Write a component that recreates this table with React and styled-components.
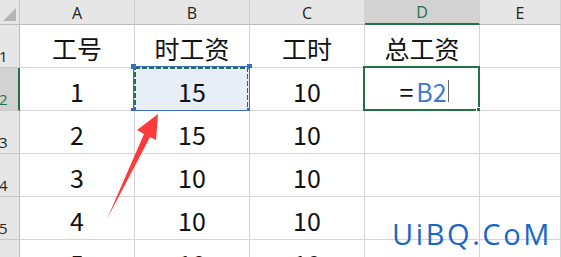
import React from "react";
import styled, { createGlobalStyle } from "styled-components";

const GlobalStyle = createGlobalStyle`
  html, body {
    margin: 0;
    padding: 0;
    background: #fff;
    overflow: hidden;
  }
  * {
    box-sizing: border-box;
  }
`;

const cols = ["A", "B", "C", "D", "E"];
const rows = [
  ["工号", "时工资", "工时", "总工资", ""],
  ["1", "15", "10", "", ""],
  ["2", "15", "10", "", ""],
  ["3", "10", "10", "", ""],
  ["4", "10", "10", "", ""],
  ["5", "10", "10", "", ""],
];

const App = () => {
  return (
    <>
      <GlobalStyle />
      <Sheet>
        <Corner>
          <CornerMark />
        </Corner>
        {cols.map((c) => (
          <ColHead key={c} active={c === "D"}>
            {c}
          </ColHead>
        ))}
        {rows.map((row, r) => (
          <React.Fragment key={r}>
            <RowHead active={r === 1}>
              <span>{r + 1}</span>
            </RowHead>
            {row.map((val, c) => {
              const copied = r === 1 && c === 1;
              const editing = r === 1 && c === 3;
              return (
                <Cell key={c} copied={copied}>
                  {editing ? (
                    <>
                      <Formula>
                        <Eq>=</Eq>
                        <Ref>B2</Ref>
                        <Caret />
                      </Formula>
                      <ActiveBox>
                        <FillHandle />
                      </ActiveBox>
                    </>
                  ) : (
                    val
                  )}
                  {copied && (
                    <CopyBox>
                      <svg width="100%" height="100%">
                        <rect
                          x="2"
                          y="2"
                          width="113"
                          height="42"
                          fill="none"
                          stroke="#217346"
                          strokeWidth="2"
                          strokeDasharray="5 2"
                        />
                      </svg>
                      <Handle style={{ left: -3, top: -3 }} />
                      <Handle style={{ right: -3, top: -3 }} />
                      <Handle style={{ left: -3, bottom: -3 }} />
                      <Handle style={{ right: -3, bottom: -3 }} />
                    </CopyBox>
                  )}
                </Cell>
              );
            })}
          </React.Fragment>
        ))}
        <Arrow width="561" height="257" viewBox="0 0 561 257">
          <polygon
            points="158,114 156,140 150,137 107,219 144,134 137,130"
            fill="#ff3a3a"
          />
        </Arrow>
        <Watermark>UiBQ.CoM</Watermark>
      </Sheet>
    </>
  );
};

export default App;

const Sheet = styled.div`
  position: relative;
  width: 561px;
  height: 257px;
  overflow: hidden;
  display: grid;
  grid-template-columns: 20px repeat(4, 115px) 1fr;
  grid-template-rows: 25px repeat(6, 43px);
  font-family: "Noto Sans CJK SC", "Noto Sans", sans-serif;
`;

///////header CSS//////////
const Corner = styled.div`
  position: relative;
  background: #e6e6e6;
  border-right: 1px solid #c4c4c4;
  border-bottom: 1px solid #bdbdbd;
`;
const CornerMark = styled.div`
  position: absolute;
  right: 3px;
  bottom: 3px;
  width: 0;
  height: 0;
  border-left: 13px solid transparent;
  border-bottom: 13px solid #b4b4b4;
`;
const ColHead = styled.div`
  display: flex;
  align-items: center;
  justify-content: center;
  background: ${(p) => (p.active ? "#d2d2d2" : "#e6e6e6")};
  border-right: 1px solid #d0d0d0;
  border-bottom: ${(p) => (p.active ? "2px solid #217346" : "1px solid #bdbdbd")};
  color: ${(p) => (p.active ? "#217346" : "#222")};
  font-family: "Open Sans", "Liberation Sans", sans-serif;
  font-size: 16px;
  padding-top: 1px;
`;
const RowHead = styled.div`
  display: flex;
  align-items: flex-end;
  overflow: hidden;
  background: ${(p) => (p.active ? "#d2d2d2" : "#e6e6e6")};
  border-right: ${(p) => (p.active ? "2px solid #217346" : "1px solid #bdbdbd")};
  border-bottom: 1px solid #c8c8c8;
  color: ${(p) => (p.active ? "#217346" : "#222")};
  font-family: "Open Sans", "Liberation Sans", sans-serif;
  font-size: 15px;
  line-height: 1;
  padding-bottom: 3px;
  span {
    margin-left: -1px;
  }
`;

///////cell CSS//////////
const Cell = styled.div`
  position: relative;
  display: flex;
  align-items: center;
  justify-content: center;
  background: ${(p) => (p.copied ? "#e8eef8" : "#fff")};
  border-right: 1px solid #d4d4d4;
  border-bottom: 1px solid #d4d4d4;
  color: #111;
  font-size: 25px;
  padding-top: 4px;
`;
const Formula = styled.div`
  display: flex;
  align-items: center;
  color: #111;
  padding-left: 4px;
`;
const Eq = styled.span`
  margin-right: 3px;
`;
const Ref = styled.span`
  color: #3f78d8;
`;
const Caret = styled.span`
  display: inline-block;
  width: 1px;
  height: 22px;
  margin-left: 1px;
  background: #666;
`;
const ActiveBox = styled.div`
  position: absolute;
  left: -2px;
  top: -2px;
  right: -1px;
  bottom: -1px;
  border: 2px solid #217346;
`;
const FillHandle = styled.div`
  position: absolute;
  right: -4px;
  bottom: -4px;
  width: 6px;
  height: 6px;
  background: #217346;
  border: 1px solid #fff;
`;
const CopyBox = styled.div`
  position: absolute;
  left: -2px;
  top: -2px;
  right: -1px;
  bottom: -1px;
  border: 1px solid #3b6cc4;
  svg {
    position: absolute;
    left: -1px;
    top: -1px;
  }
`;
const Handle = styled.div`
  position: absolute;
  width: 5px;
  height: 5px;
  background: #3b6cc4;
`;

///////overlay CSS//////////
const Arrow = styled.svg`
  position: absolute;
  left: 0;
  top: 0;
  pointer-events: none;
`;
const Watermark = styled.div`
  position: absolute;
  left: 392px;
  top: 219px;
  color: #1a66c8;
  font-family: "Open Sans", "Liberation Sans", sans-serif;
  font-size: 29px;
  font-weight: 500;
  line-height: 1;
  letter-spacing: 2.6px;
`;
